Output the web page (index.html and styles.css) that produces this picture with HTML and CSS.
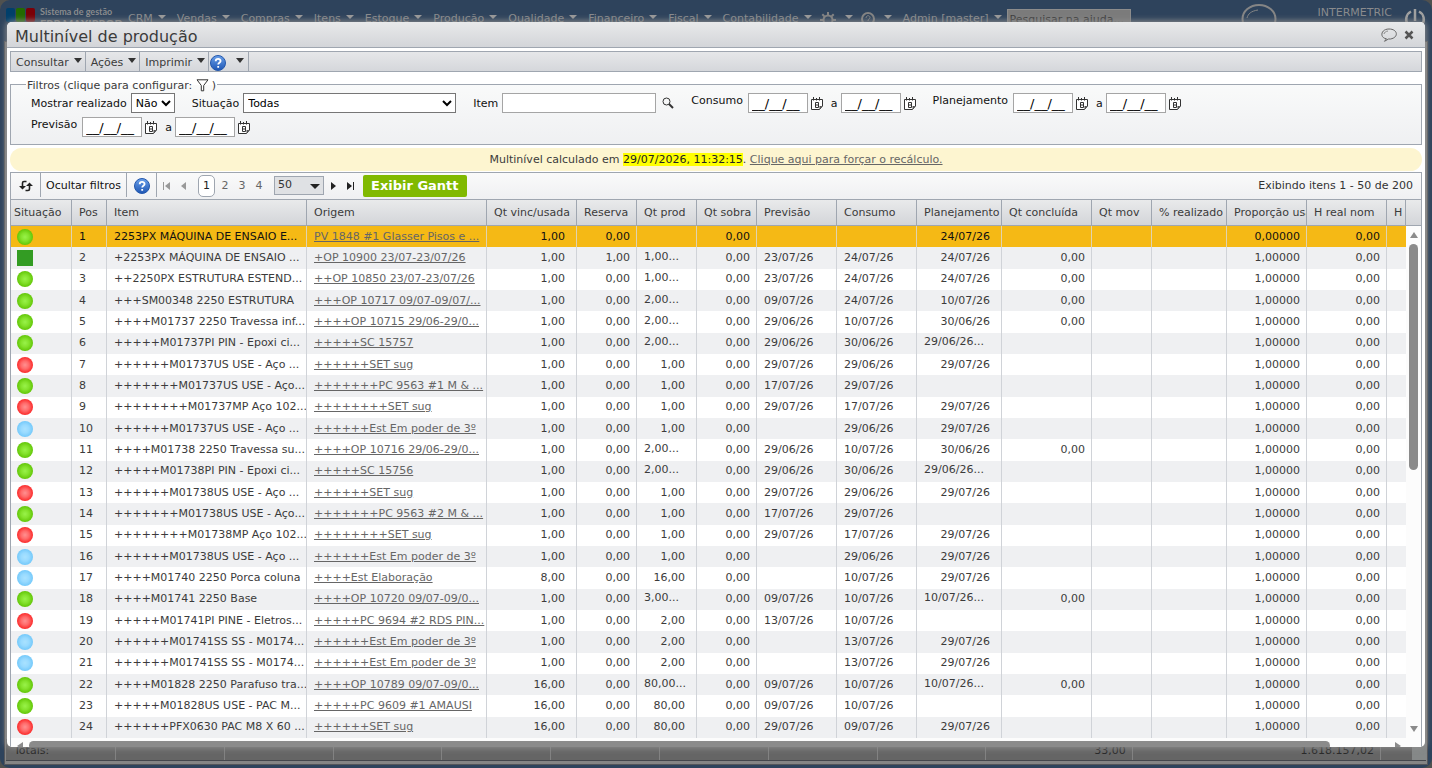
FILE: index.html
```html
<!DOCTYPE html>
<html lang="pt-BR">
<head>
<meta charset="utf-8">
<title>Multinível de produção</title>
<link rel="stylesheet" href="styles.css">
</head>
<body>
<svg class="sprite" aria-hidden="true">
  <defs>
    <radialGradient id="g-green"><stop offset="0" stop-color="#99f24a"/><stop offset=".5" stop-color="#84e22c"/><stop offset="1" stop-color="#62c608"/></radialGradient>
    <radialGradient id="g-red"><stop offset="0" stop-color="#ff9090"/><stop offset=".5" stop-color="#ff6a6a"/><stop offset="1" stop-color="#fb2b2b"/></radialGradient>
    <radialGradient id="g-blue"><stop offset="0" stop-color="#a9e2ff"/><stop offset=".5" stop-color="#98daff"/><stop offset="1" stop-color="#74c9fa"/></radialGradient>
    <linearGradient id="g-help" x2="0" y2="1"><stop offset="0" stop-color="#6aa0ea"/><stop offset="1" stop-color="#1e56b4"/></linearGradient>
  </defs>
  <symbol id="i-help" viewBox="0 0 16 16"><circle cx="8" cy="8" r="7.5" fill="url(#g-help)" stroke="#2458ac"/><path d="M5.700 6.200c0-3.100 4.900-3 4.900-.2 0 1.800-2.400 1.800-2.400 3.600M8.200 11v1.800" fill="none" stroke="#fff" stroke-width="1.800"/></symbol>
  <symbol id="i-cal" viewBox="0 0 12 13"><path d="M.5 2.500h11v6.500l-3 3.500H.5z" fill="#fff" stroke="#333"/><path d="M2.500 0v3.500M5.500 1v2.500M8.500 0v3.500" stroke="#333"/><path d="M11.500 9l-3 0v3.500z" fill="#555"/><path d="M4.500 5.500h3v5h-3zM4.500 8h3" fill="none" stroke="#333"/></symbol>
  <symbol id="i-search" viewBox="0 0 12 12"><circle cx="4.500" cy="4.500" r="3.500" fill="none" stroke="#333"/><path d="M7 7l4 4" stroke="#333" stroke-width="2"/></symbol>
  <symbol id="i-chat" viewBox="0 0 16 14"><path d="M5.500 10.800C-1.500 10 -.5 1 8 1c9 0 10 8.500 1.500 10H7.500L3.500 13.300z" fill="none" stroke="#666"/><path d="M3 6c.3-1.600 1.800-2.700 4-3" fill="none" stroke="#888"/></symbol>
</svg>

<div class="app">
  <header class="top">
    <div class="logo"><i class="sq blue"></i><i class="sq green"></i><i class="sq red"></i><span>Sistema de gestão<br><b>ERP MAXIPROD</b></span></div>
    <nav class="nav">
      <a href="#">CRM</a><a href="#">Vendas</a><a href="#">Compras</a><a href="#">Itens</a><a href="#">Estoque</a><a href="#">Produção</a><a href="#">Qualidade</a><a href="#">Financeiro</a><a href="#">Fiscal</a><a href="#">Contabilidade</a>
      <a href="#" class="icon" aria-label="Configurações"><svg width="16" height="16" viewBox="0 0 16 16"><circle cx="8" cy="8" r="4.500" fill="none" stroke="#838383" stroke-width="2"/><path d="M8 0v3M8 13v3M0 8h3M13 8h3M2.300 2.300l2 2M11.700 11.700l2 2M2.300 13.700l2-2M11.700 4.300l2-2" stroke="#838383" stroke-width="2"/></svg></a>
      <a href="#" class="icon" aria-label="Ajuda"><svg width="14" height="14" viewBox="0 0 14 14"><circle cx="7" cy="7" r="6" fill="none" stroke="#838383" stroke-width="2"/><path d="M5 6c0-3 4-3 4-.5C9 7 7 7 7 9" fill="none" stroke="#838383"/></svg></a>
      <a href="#">Admin [master]</a>
    </nav>
    <input class="help-search" type="text" aria-label="Pesquisar na ajuda" placeholder="Pesquisar na ajuda...">
    <svg class="bubble" width="36" height="34" viewBox="0 0 36 34"><ellipse cx="18" cy="15" rx="16.500" ry="14" fill="none" stroke="#858585" stroke-width="2"/><path d="M6 14c1-4 4-7 11-8" fill="none" stroke="#858585"/></svg>
    <span class="company">INTERMETRIC</span>
    <svg class="power" width="22" height="22" viewBox="0 0 22 22"><path d="M7 3.500a8.800 8.800 0 1 0 8 0M11 1v12" fill="none" stroke="#a0a0a0" stroke-width="2.500"/></svg>
  </header>
  <div class="page">
    <div class="totals"><span>Totais:</span><i></i><i></i><i></i><i></i><i></i><i></i><i></i><i></i><i></i><b>33,00</b><i></i><b class="sum">1.618.157,02</b><i class="end"></i><em></em></div>
  </div>
</div>

<main class="dialog" role="dialog" aria-labelledby="dlg-title">
  <div class="titlebar">
    <h1 id="dlg-title">Multinível de produção</h1>
    <button aria-label="Comentar"><svg width="16" height="14"><use href="#i-chat"/></svg></button>
    <button aria-label="Fechar"><svg width="10" height="10" viewBox="0 0 10 10"><path d="M1.500 1.500l7 7M8.500 1.500l-7 7" stroke="#555" stroke-width="2.500"/></svg></button>
  </div>

  <div class="menubar">
    <button>Consultar<i class="caret"></i></button>
    <button>Ações<i class="caret"></i></button>
    <button>Imprimir<i class="caret"></i></button>
    <button class="help" aria-label="Ajuda"><svg width="16" height="16"><use href="#i-help"/></svg><i class="caret"></i></button>
  </div>

  <fieldset class="filters">
    <legend>Filtros (clique para configurar: <button aria-label="Configurar filtros"><svg width="13" height="13" viewBox="0 0 13 13"><path d="M1 .8h11L7.700 6.500v5.300h-2.400V6.500z" fill="#fff" stroke="#333"/></svg></button>)</legend>
    <div class="fields">
      <div class="field"><label for="f1">Mostrar realizado</label><select id="f1"><option>Não</option><option>Sim</option></select></div>
      <div class="field"><label for="f2">Situação</label><select id="f2" class="long"><option>Todas</option></select></div>
      <div class="field"><label for="f3">Item</label><input id="f3" class="item" type="text"><button aria-label="Pesquisar item"><svg width="12" height="12"><use href="#i-search"/></svg></button></div>
      <div class="field date"><label for="f4">Consumo</label><input id="f4" type="text" value="__/__/__"><button aria-label="Calendário"><svg width="12" height="13"><use href="#i-cal"/></svg></button><label for="f5">a</label><input id="f5" type="text" value="__/__/__"><button aria-label="Calendário"><svg width="12" height="13"><use href="#i-cal"/></svg></button></div>
      <div class="field date"><label for="f6">Planejamento</label><input id="f6" type="text" value="__/__/__"><button aria-label="Calendário"><svg width="12" height="13"><use href="#i-cal"/></svg></button><label for="f7">a</label><input id="f7" type="text" value="__/__/__"><button aria-label="Calendário"><svg width="12" height="13"><use href="#i-cal"/></svg></button></div>
      <div class="field date"><label for="f8">Previsão</label><input id="f8" type="text" value="__/__/__"><button aria-label="Calendário"><svg width="12" height="13"><use href="#i-cal"/></svg></button><label for="f9">a</label><input id="f9" type="text" value="__/__/__"><button aria-label="Calendário"><svg width="12" height="13"><use href="#i-cal"/></svg></button></div>
    </div>
  </fieldset>

  <p class="notice">Multinível calculado em <mark>29/07/2026, 11:32:15</mark>. <a href="#">Clique aqui para forçar o recálculo.</a></p>

  <section class="grid">
    <div class="toolbar">
      <button class="refresh" aria-label="Atualizar"><svg width="14" height="12" viewBox="0 0 14 12"><path d="M7.500 1.500H5Q3.500 1.500 3.500 3v4M6.500 10.500h2.500q1.500 0 1.500-1.500V5" fill="none" stroke="#222" stroke-width="1.600"/><path d="M0 6h7L3.500 9.500zM7 6h7l-3.500-3.500z" fill="#222"/></svg></button>
      <button class="hide">Ocultar filtros</button>
      <button class="ask" aria-label="Ajuda"><svg width="16" height="16"><use href="#i-help"/></svg></button>
      <div class="pager">
        <button class="off" aria-label="Primeira"><svg width="7" height="8" viewBox="0 0 7 8"><path d="M0 0h1v8H0zM7 0v8L2 4z" fill="#999"/></svg></button>
        <button class="off" aria-label="Anterior"><svg width="5" height="8" viewBox="0 0 5 8"><path d="M5 0v8L0 4z" fill="#999"/></svg></button>
        <span class="pages"><button class="cur">1</button><button>2</button><button>3</button><button>4</button></span>
        <span class="size"><select aria-label="Itens por página"><option>50</option></select></span>
        <button class="next" aria-label="Próxima"><svg width="5" height="8" viewBox="0 0 5 8"><path d="M0 0v8l5-4z" fill="#222"/></svg></button>
        <button aria-label="Última"><svg width="7" height="8" viewBox="0 0 7 8"><path d="M6 0h1v8H6zM0 0v8l5-4z" fill="#222"/></svg></button>
      </div>
      <button class="gantt">Exibir Gantt</button>
      <span class="count">Exibindo itens 1 - 50 de 200</span>
    </div>
    <div class="body">
      <div class="viewport">
        <table>
          <colgroup><col class="w61"><col class="w35"><col class="w200"><col class="w180"><col class="w90"><col class="w60"><col class="w60"><col class="w60"><col class="w80"><col class="w80"><col class="w85"><col class="w90"><col class="w60"><col class="w75"><col class="w80"><col class="w80"><col></colgroup>
          <thead><tr><th>Situação</th><th>Pos</th><th>Item</th><th>Origem</th><th>Qt vinc/usada</th><th>Reserva</th><th>Qt prod</th><th>Qt sobra</th><th>Previsão</th><th>Consumo</th><th>Planejamento</th><th>Qt concluída</th><th>Qt mov</th><th>% realizado</th><th>Proporção usada</th><th>H real nom</th><th>H v</th></tr></thead>
          <tbody id="rows"></tbody>
        </table>
      </div>
      <div class="vbar"><span class="corner"></span><i class="up"></i><span class="thumb"></span><i class="down"></i></div>
    </div>
    <div class="hbar"><i class="left"></i><span></span><i class="right"></i></div>
  </section>
</main>
<script src="rows.js"></script>
</body>
</html>
```
FILE: rows.js
```js
// situação | item | origem | vinc | reserva | prod | sobra | previsão | consumo | planejamento | concluída | proporção
const data = `
g|2253PX MÁQUINA DE ENSAIO E...|PV 1848 #1 Glasser Pisos e ...|1,00|0,00||0,00|||24/07/26||0,00000
s|+2253PX MÁQUINA DE ENSAIO ...|+OP 10900 23/07-23/07/26|1,00|1,00|1,00...|0,00|23/07/26|24/07/26|24/07/26|0,00|1,00000
g|++2250PX ESTRUTURA ESTEND...|++OP 10850 23/07-23/07/26|1,00|0,00|1,00...|0,00|23/07/26|24/07/26|24/07/26|0,00|1,00000
g|+++SM00348 2250 ESTRUTURA|+++OP 10717 09/07-09/07/...|1,00|0,00|2,00...|0,00|09/07/26|24/07/26|10/07/26|0,00|1,00000
g|++++M01737 2250 Travessa inf...|++++OP 10715 29/06-29/0...|1,00|0,00|2,00...|0,00|29/06/26|10/07/26|30/06/26|0,00|1,00000
g|+++++M01737PI PIN - Epoxi ci...|+++++SC 15757|1,00|0,00|2,00...|0,00|29/06/26|30/06/26|29/06/26...||1,00000
r|++++++M01737US USE - Aço ...|++++++SET sug|1,00|0,00|1,00|0,00|29/07/26|29/06/26|29/07/26||1,00000
g|+++++++M01737US USE - Aço...|+++++++PC 9563 #1 M & ...|1,00|0,00|1,00|0,00|17/07/26|29/07/26|||1,00000
r|++++++++M01737MP Aço 102...|++++++++SET sug|1,00|0,00|1,00|0,00|29/07/26|17/07/26|29/07/26||1,00000
b|++++++M01737US USE - Aço ...|++++++Est Em poder de 3º|1,00|0,00|1,00|0,00||29/06/26|29/07/26||1,00000
g|++++M01738 2250 Travessa su...|++++OP 10716 29/06-29/0...|1,00|0,00|2,00...|0,00|29/06/26|10/07/26|30/06/26|0,00|1,00000
g|+++++M01738PI PIN - Epoxi ci...|+++++SC 15756|1,00|0,00|2,00...|0,00|29/06/26|30/06/26|29/06/26...||1,00000
r|++++++M01738US USE - Aço ...|++++++SET sug|1,00|0,00|1,00|0,00|29/07/26|29/06/26|29/07/26||1,00000
g|+++++++M01738US USE - Aço...|+++++++PC 9563 #2 M & ...|1,00|0,00|1,00|0,00|17/07/26|29/07/26|||1,00000
r|++++++++M01738MP Aço 102...|++++++++SET sug|1,00|0,00|1,00|0,00|29/07/26|17/07/26|29/07/26||1,00000
b|++++++M01738US USE - Aço ...|++++++Est Em poder de 3º|1,00|0,00|1,00|0,00||29/06/26|29/07/26||1,00000
b|++++M01740 2250 Porca coluna|++++Est Elaboração|8,00|0,00|16,00|0,00||10/07/26|29/07/26||1,00000
g|++++M01741 2250 Base|++++OP 10720 09/07-09/0...|1,00|0,00|3,00...|0,00|09/07/26|10/07/26|10/07/26...|0,00|1,00000
r|+++++M01741PI PINE - Eletros...|+++++PC 9694 #2 RDS PIN...|1,00|0,00|2,00|0,00|13/07/26|10/07/26|||1,00000
b|++++++M01741SS SS - M0174...|++++++Est Em poder de 3º|1,00|0,00|2,00|0,00||13/07/26|29/07/26||1,00000
b|++++++M01741SS SS - M0174...|++++++Est Em poder de 3º|1,00|0,00|2,00|0,00||13/07/26|29/07/26||1,00000
g|++++M01828 2250 Parafuso tra...|++++OP 10789 09/07-09/0...|16,00|0,00|80,00...|0,00|09/07/26|10/07/26|10/07/26...|0,00|1,00000
g|+++++M01828US USE - PAC M...|+++++PC 9609 #1 AMAUSI|16,00|0,00|80,00|0,00|09/07/26|10/07/26|||1,00000
r|++++++PFX0630 PAC M8 X 60 ...|++++++SET sug|16,00|0,00|80,00|0,00|29/07/26|09/07/26|29/07/26||1,00000`;

const fills = { g: 'g-green', r: 'g-red', b: 'g-blue' };
const icon = (s) => s === 's'
  ? '<svg width="16" height="16"><rect width="16" height="16" fill="#339c23"/></svg>'
  : `<svg width="16" height="16"><circle cx="8" cy="8" r="8" fill="url(#${fills[s]})"/></svg>`;
const esc = (t) => t.replace(/&/g, '&amp;');
const cell = (t, cls) => `<td class="${t.endsWith('...') ? 'cut' : cls}">${t}</td>`;

document.getElementById('rows').innerHTML = data.trim().split('\n').map((line, i) => {
  const [s, item, origin, linked, reserved, made, left, due, use, plan, done, ratio] = line.split('|').map(esc);
  return `<tr><td class="st">${icon(s)}</td><td>${i + 1}</td><td>${item}</td><td><a href="#">${origin}</a></td>`
    + cell(linked, 'num far') + cell(reserved, 'num') + cell(made, 'num far') + cell(left, 'num')
    + `<td>${due}</td><td>${use}</td>` + cell(plan, 'num far') + cell(done, 'num')
    + `<td></td><td></td><td class="num">${ratio}</td><td class="num">0,00</td><td></td></tr>`;
}).join('');
```
FILE: styles.css
```css
* { box-sizing: border-box; }
html, body { height: 100%; }
body { margin: 0; overflow: hidden; background: #50514f; color: #3b3b3b; font: 11px/14px "DejaVu Sans", Verdana, sans-serif; }
button, input, select { font: inherit; color: inherit; }
button { background: none; border: 0; padding: 0; margin: 0; display: inline-flex; align-items: center; justify-content: center; }
svg { display: block; flex: none; }
.sprite { position: absolute; width: 0; height: 0; }

/* application behind the dialog */
.app { height: 100%; background: #2e435c; border-radius: 10px; padding: 0 4px 3px; display: flex; flex-direction: column; overflow: hidden; }
.top { height: 41px; display: flex; align-items: flex-start; padding: 8px 0 0 2px; color: #8a8b8d; flex: none; }
.logo { display: flex; gap: 1px; width: 122px; font: bold 9px/12px Lato, sans-serif; white-space: nowrap; flex: none; }
.logo b { font-size: 11px; }
.logo span { padding-left: 4px; margin-top: -2px; }
.sq { width: 9px; height: 14px; border-radius: 2px; }
.sq.blue { background: #003f6b; }
.sq.green { background: #236b00; }
.sq.red { background: #7b0007; }
.nav { display: flex; gap: 11px; align-items: flex-start; padding-top: 4px; }
.nav a { color: inherit; text-decoration: none; white-space: nowrap; display: flex; gap: 5px; }
.nav a::after { content: ""; border: 4px solid transparent; border-top-color: #9a9a9a; border-bottom: 0; margin-top: 3px; }
.nav .icon { gap: 9px; margin-left: -3px; }
.help-search { width: 124px; height: 20px; margin: 1px 0 0 5px; background: #7b7b7b; border: 1px solid #8c8c8c; padding: 0 2px; }
.help-search::placeholder { color: #3c3c3c; opacity: 1; }
.bubble { margin: -4px 0 0 auto; }
.company { margin: -2px 12px 0 40px; }
.power { margin-right: 2px; }
.page { flex: 1; background: #858585; border: 1px solid #55565a; display: flex; align-items: flex-end; padding: 0 1px 3px; }
.totals { flex: 1; height: 22px; background: #656565; border-bottom: 1px solid #45474c; display: flex; align-items: center; color: #262626; padding-left: 8px; }
.totals span { width: 101px; }
.totals i { flex: 1; height: 100%; border-left: 1px solid #828282; }
.totals b { font-weight: normal; padding: 3px 6px 0 0; }
.totals span { padding-top: 3px; }
.totals .sum { padding-left: 60px; }
.totals .end { flex: none; width: 32px; }
.totals em { width: 14px; height: 100%; background: #858888; }

/* dialog */
.dialog { position: absolute; inset: 22px 7px 21px; background: #fff; border-radius: 5px; overflow: hidden; box-shadow: 0 0 6px 1px #8e8e8e; display: flex; flex-direction: column; padding: 0 3px; }
.titlebar { flex: none; height: 26px; margin: 0 -3px 3px; padding: 0 11px 0 8px; display: flex; align-items: center; background: linear-gradient(#e8e9ea, #d3d5d9); border-bottom: 1px solid #9fa6b0; }
.titlebar h1 { margin: 5px auto 0 0; font-weight: normal; font-size: 16px; line-height: 20px; }
.titlebar button + button { margin-left: 7px; }

.menubar { flex: none; height: 21px; display: flex; background: linear-gradient(#e6e7e9, #d5d7db); border: 1px solid #9fa6b0; margin-bottom: 5px; }
.menubar button { border-right: 1px solid #9fa6b0; padding: 2px 3px 0 5px; }
.menubar .help { padding: 3px 4px 0 1px; }
.caret { border: 4px solid transparent; border-top: 5px solid #333; border-bottom: 0; margin: -4px 0 0 5px; }
.menubar .help .caret { margin-left: 10px; margin-top: -6px; }

.filters { flex: none; margin: 0 0 3px; padding: 1px 20px 7px; border: 1px solid #9fa6b0; background: linear-gradient(#f9fafa, #eff0f2); min-width: 0; }
.filters legend { padding: 2px 1px 0; margin-left: -5px; display: flex; align-items: center; height: 15px; white-space: pre; }
.filters legend button { margin-right: 3px; }
.fields { display: flex; flex-wrap: wrap; gap: 4px 17px; color: #111; }
.field { display: flex; align-items: center; gap: 4px; height: 20px; }
.field label { padding-top: 2px; }
.field select { height: 20px; padding: 0; border: 1px solid #767676; border-radius: 0; background: #fff; color: #000; }
.field .long { width: 213px; }
.field input { width: 60px; height: 20px; border: 1px solid #a5a5a5; padding: 0 3px; background: #fff; color: #000; font-size: 13px; }
.field .item { width: 154px; }
.field .item + button { margin-left: 2px; }
.date { gap: 3px; }
.date label:first-child { padding-bottom: 6px; margin-right: 2px; }
.date button + label { margin-left: 5px; }

.notice { flex: none; margin: 0 0 1px; height: 23px; padding-top: 1px; line-height: 22px; text-align: center; background: #fdf5d0; border-radius: 12px; }
.notice mark { background: #ff0; color: #222; }
.notice a { color: #666; }

/* grid */
.grid { flex: 1; min-height: 0; display: flex; flex-direction: column; border: 1px solid #9fa6b0; border-bottom: 0; }
.toolbar { flex: none; height: 26px; display: flex; align-items: center; background: linear-gradient(#fafafa, #eff0f2); color: #111; }
.toolbar .refresh, .toolbar .hide, .toolbar .ask { height: 24px; border-right: 1px solid #9fa6b0; align-self: flex-start; padding-top: 2px; }
.refresh { width: 30px; }
.hide { width: 86px; }
.ask { width: 30px; }
.pager { display: flex; align-items: center; gap: 9px; padding: 0 9px 0 6px; color: #666; }
.pager .off { margin-right: 2px; }
.pager .next { margin: 0 2px 0 -2px; }
.pages { display: flex; gap: 1px; margin-left: 1px; }
.pages button { width: 16px; height: 22px; }
.pages .cur { border: 1px solid #9fa6b0; border-radius: 5px; background: #fff; color: #222; margin-right: 1px; width: 17px; }
.size { position: relative; margin-left: -2px; }
.size select { appearance: none; display: block; width: 50px; height: 19px; border: 1px solid #9fa6b0; border-radius: 0; background: #dfe1e4; color: #333; padding: 0 3px; margin-bottom: 2px; }
.size::after { content: ""; position: absolute; right: 4px; top: 8px; border: 5px solid transparent; border-top-color: #222; border-bottom: 0; pointer-events: none; }
.gantt { height: 22px; padding: 0 8px; border-radius: 2px; background: #80b900; color: #fff; font-weight: bold; font-size: 13px; }
.count { margin-left: auto; padding-right: 8px; color: #333; }

.body { flex: 1; min-height: 0; display: flex; }
.viewport { flex: 1; min-width: 0; overflow: hidden; }
table { width: 100%; height: 100%; table-layout: fixed; border-collapse: separate; border-spacing: 0; }
th, td { padding: 0 7px; white-space: nowrap; overflow: hidden; text-align: left; font-weight: normal; line-height: 14px; border-right: 1px solid #d0d3d8; }
th:first-child { padding-left: 3px; }
th { height: 27px; padding-right: 0; background: linear-gradient(#e9eaeb, #d3d5d9); border-top: 1px solid #9fa6b0; border-bottom: 1px solid #9fa6b0; border-right-color: #9fa6b0; }
td:last-child { border-right: 0; }
td { padding-right: 0; }
td.st { padding: 0 0 0 6px; }
td.num { text-align: right; padding-right: 6px; }
td.far { padding-right: 11px; }
.cut { padding-bottom: 2px; }
td a { color: #666; }
tbody tr:nth-child(even) { background: #eff0f2; }
tbody tr:first-child { background: #f5b915; color: #111; }
tbody tr:first-child td { border-right-color: #e0d3b0; }
.w35 { width: 35px; } .w60 { width: 60px; } .w61 { width: 61px; } .w75 { width: 75px; } .w80 { width: 80px; } .w85 { width: 85px; } .w90 { width: 90px; } .w180 { width: 180px; } .w200 { width: 200px; }

.vbar { width: 15px; flex: none; display: flex; flex-direction: column; align-items: center; background: #fcfcfc; }
.corner { align-self: stretch; height: 27px; background: linear-gradient(#e9eaeb, #d3d5d9); border: solid #9fa6b0; border-width: 1px 0; }
.up, .down { border: 4px solid transparent; }
.up { border-bottom: 6px solid #8b8b8b; border-top: 0; margin: 6px 0; }
.down { border-top: 6px solid #8b8b8b; border-bottom: 0; margin: auto 0 6px; }
.thumb { width: 9px; height: 42%; border-radius: 5px; background: #8b8b8b; }
.hbar { flex: none; height: 9px; padding: 3px 20px 0 6px; display: flex; gap: 6px; background: #fcfcfc; overflow: hidden; }
.hbar span { width: 94%; height: 9px; border-radius: 5px; background: #8b8b8b; }
.left, .right { border: 4px solid transparent; margin-top: 1px; height: 8px; }
.left { border-right: 6px solid #8b8b8b; border-left: 0; }
.right { border-left: 6px solid #8b8b8b; border-right: 0; margin-left: auto; }
```
